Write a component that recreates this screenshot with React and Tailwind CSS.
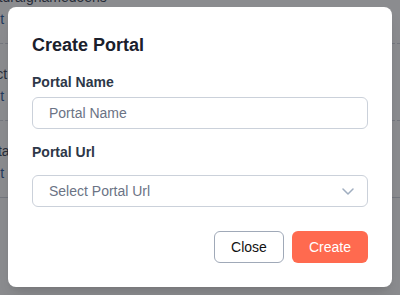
import React, { useState } from "react";

const rows = [
    { title: "testdraignamedoens", link: "Edit |", last: false },
    { title: "Acct", link: "Edit |", last: false },
    { title: "Data", link: "Edit |", last: true },
];

const ChevronDown = () => (
    <svg width="12" height="7" viewBox="0 0 12 7" fill="none">
        <path d="M1 1l5 5 5-5" stroke="#a0aec0" strokeWidth="1.5" strokeLinecap="round" strokeLinejoin="round" />
    </svg>
);

const App = () => {
    const [name, setName] = useState("");

    return (
        <div className="relative h-[295px] w-[400px] overflow-hidden bg-white font-['Liberation_Sans',Arial,sans-serif]">
            {/* page behind the overlay */}
            <div className="-mt-[33px] -ml-[20px]">
                {rows.map((row) => (
                    <div
                        key={row.title}
                        className={`pt-[20px] pb-[14px] border-b ${
                            row.last ? "border-solid border-gray-300" : "border-dashed border-gray-300"
                        }`}
                    >
                        <div className="text-sm leading-5 text-gray-700">{row.title}</div>
                        <div className="mt-[2px] text-sm leading-5 text-[#2b5c9e]">{row.link}</div>
                    </div>
                ))}
            </div>

            <div className="absolute inset-0 bg-[#17191f]/50"></div>

            <div className="absolute inset-0 flex justify-center pt-[7px]">
                <div className="w-[384px] h-[280px] rounded-lg bg-white px-6 pt-6 pb-6 shadow-lg">
                    <h2 className="mb-[13px] text-lg leading-7 font-bold text-[#1a202c]">Create Portal</h2>

                    <label htmlFor="portalName" className="mb-[5px] block text-sm leading-5 font-bold text-[#2d3748]">
                        Portal Name
                    </label>
                    <input
                        id="portalName"
                        type="text"
                        value={name}
                        onChange={(e) => setName(e.target.value)}
                        placeholder="Portal Name"
                        className="block h-8 w-full rounded-md border border-[#cbd1da] px-4 text-sm text-[#2d3748] placeholder:text-[#6b7385] outline-none"
                    />

                    <label className="mt-[13px] mb-[13px] block text-sm leading-5 font-bold text-[#2d3748]">
                        Portal Url
                    </label>
                    <div className="flex h-8 w-full items-center justify-between rounded-md border border-[#cbd1da] pl-4 pr-[13px] text-sm text-[#6b7385]">
                        <span>Select Portal Url</span>
                        <ChevronDown />
                    </div>

                    <div className="mt-6 flex justify-end gap-2">
                        <button className="h-8 w-[70px] rounded-md border border-[#a0a9b8] bg-white text-sm text-[#111111]">
                            Close
                        </button>
                        <button className="h-8 w-[76px] rounded-md bg-[#ff6a4f] text-sm text-white">Create</button>
                    </div>
                </div>
            </div>
        </div>
    );
};

export default App;
